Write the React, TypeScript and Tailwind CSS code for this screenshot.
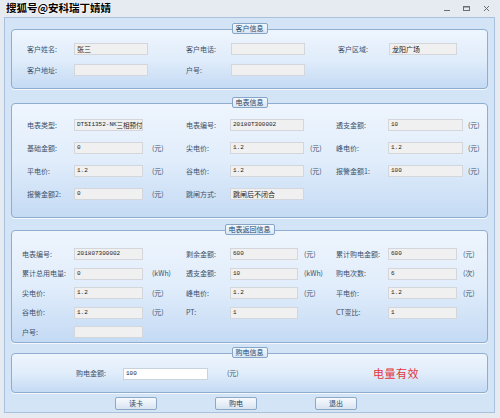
import React from "react";

const CJK = "font-['Noto_Sans_CJK_SC','Noto_Sans',sans-serif]";
const lbl = `text-[7px] leading-none text-[#3d516a] whitespace-nowrap ${CJK}`;
const unit = `text-[7px] leading-none text-[#3d516a] whitespace-nowrap ${CJK}`;
const inputCls =
  "h-[12px] border border-[#d3d6da] bg-[#f0f0f0] flex items-center px-[2px] text-[6px] leading-none text-[#1e1e1e] font-['Liberation_Mono','Noto_Sans_CJK_SC',monospace] whitespace-nowrap overflow-hidden";
const cjkVal = `text-[7px] leading-none text-[#1e1e1e] ${CJK}`;

function Label({ t }: { t: string }) {
  return <div className={`h-[12px] flex items-center ${lbl}`}>{t}</div>;
}
function Input({
  v = "",
  white = false,
  cjk = false,
  children,
}: {
  v?: string;
  white?: boolean;
  cjk?: boolean;
  children?: React.ReactNode;
}) {
  return (
    <div className={`${inputCls} ${white ? "!bg-white !border-[#c9d3de]" : ""}`}>
      {children ? children : cjk ? <span className={cjkVal}>{v}</span> : v}
    </div>
  );
}
function Unit({ t = "", pl }: { t?: string; pl: string }) {
  return <div className={`h-[12px] flex items-center ${pl} ${unit}`}>{t}</div>;
}
function Empty() {
  return <div className="h-[12px]" />;
}

function Box({
  title,
  className,
  children,
}: {
  title: string;
  className: string;
  children: React.ReactNode;
}) {
  return (
    <div
      className={`relative w-[477px] border border-[#8fadcf] rounded-[4px] bg-gradient-to-b from-[#eef5fd] via-[#e1edfb] to-[#c4daf4] shadow-[0_1px_0_#f4f8fc] ${className}`}
    >
      <div
        className={`absolute left-1/2 -translate-x-1/2 -top-[7px] h-[11px] px-[3px] flex items-center border border-[#86a5c7] rounded-[2px] bg-gradient-to-b from-[#f3f8fd] to-[#d9e7f6] text-[7px] leading-none text-[#2c4767] whitespace-nowrap ${CJK}`}
      >
        {title}
      </div>
      {children}
    </div>
  );
}

function Btn({ t }: { t: string }) {
  return (
    <div
      className={`w-[42px] h-[13px] flex items-center justify-center border border-[#8da8c6] rounded-[2px] bg-gradient-to-b from-[#f7fafd] to-[#d8e4f1] text-[7px] leading-none text-[#2f4663] ${CJK}`}
    >
      {t}
    </div>
  );
}

export default function App() {
  return (
    <div className="w-[500px] h-[418px] bg-[#e6ebf1] flex flex-col overflow-hidden">
      {/* title bar */}
      <div className="h-[17px] flex items-center justify-between pl-[6px] pr-[10px]">
        <div
          className={`text-[10.5px] font-bold leading-none text-black [text-shadow:0_0_2px_#fff,0_0_2px_#fff,0_0_1px_#fff] ${CJK}`}
        >
          搜狐号@安科瑞丁婧婧
        </div>
        <div className="flex items-center gap-[12px] text-[#555]">
          <svg width="7" height="7" viewBox="0 0 7 7">
            <rect x="0" y="5" width="6" height="1" fill="#6b6f74" />
          </svg>
          <svg width="8" height="7" viewBox="0 0 8 7">
            <rect x="0.5" y="1.5" width="6" height="4" fill="none" stroke="#6b6f74" />
            <rect x="0.5" y="1" width="6" height="1.5" fill="#6b6f74" />
          </svg>
          <svg width="7" height="7" viewBox="0 0 7 7">
            <path d="M1 1 L6 6 M6 1 L1 6" stroke="#6b6f74" strokeWidth="1" />
          </svg>
        </div>
      </div>

      {/* client area */}
      <div className="ml-[4px] w-[491px] h-[396px] border border-[#a9c1dc] bg-[#d3e4f6] pl-[6px] pt-[11px] flex flex-col">
        {/* 客户信息 */}
        <Box title="客户信息" className="h-[60px] pt-[13px]">
          <div className="grid grid-cols-[47px_74px_38px_45px_74px_33px_51px_68px] gap-y-[9px] pl-[15px]">
            <Label t="客户姓名:" />
            <Input v="张三" cjk />
            <Empty />
            <Label t="客户电话:" />
            <Input />
            <Empty />
            <Label t="客户区域:" />
            <Input v="龙阳广场" cjk />

            <Label t="客户地址:" />
            <Input />
            <Empty />
            <Label t="户号:" />
            <Input />
            <Empty />
            <Empty />
            <Empty />
          </div>
        </Box>

        {/* 电表信息 */}
        <Box title="电表信息" className="mt-[14px] h-[115px] pt-[15px]">
          <div className="grid grid-cols-[47px_69px_43px_44px_74px_32px_52px_75px_20px] gap-y-[11px] pl-[15px]">
            <Label t="电表类型:" />
            <Input>
              <span>DTSI1352-NK</span>
              <span className={`text-[6.5px] leading-none ${CJK}`}>三相预付</span>
            </Input>
            <Empty />
            <Label t="电表编号:" />
            <Input v="20180T300002" />
            <Empty />
            <Label t="透支金额:" />
            <Input v="10" />
            <Unit t="(元)" pl="pl-[5px]" />

            <Label t="基础金额:" />
            <Input v="0" />
            <Unit t="(元)" pl="pl-[9px]" />
            <Label t="尖电价:" />
            <Input v="1.2" />
            <Unit t="(元)" pl="pl-[6px]" />
            <Label t="峰电价:" />
            <Input v="1.2" />
            <Unit t="(元)" pl="pl-[5px]" />

            <Label t="平电价:" />
            <Input v="1.2" />
            <Unit t="(元)" pl="pl-[9px]" />
            <Label t="谷电价:" />
            <Input v="1.2" />
            <Unit t="(元)" pl="pl-[6px]" />
            <Label t="报警金额1:" />
            <Input v="100" />
            <Unit t="(元)" pl="pl-[5px]" />

            <Label t="报警金额2:" />
            <Input v="0" />
            <Unit t="(元)" pl="pl-[9px]" />
            <Label t="跳闸方式:" />
            <Input v="跳闸后不闭合" cjk />
            <Empty />
            <Empty />
            <Empty />
            <Empty />
          </div>
        </Box>

        {/* 电表返回信息 */}
        <Box title="电表返回信息" className="mt-[12px] h-[113px] pt-[17px]">
          <div className="grid grid-cols-[52px_69px_43px_44px_68px_38px_52px_69px_24px] gap-y-[7.5px] pl-[10px]">
            <Label t="电表编号:" />
            <Input v="201807300002" />
            <Empty />
            <Label t="剩余金额:" />
            <Input v="600" />
            <Unit t="(元)" pl="pl-[6px]" />
            <Label t="累计购电金额:" />
            <Input v="600" />
            <Unit t="(元)" pl="pl-[6px]" />

            <Label t="累计总用电量:" />
            <Input v="0" />
            <Unit t="(kWh)" pl="pl-[9px]" />
            <Label t="透支金额:" />
            <Input v="10" />
            <Unit t="(kWh)" pl="pl-[6px]" />
            <Label t="购电次数:" />
            <Input v="6" />
            <Unit t="(次)" pl="pl-[6px]" />

            <Label t="尖电价:" />
            <Input v="1.2" />
            <Unit t="(元)" pl="pl-[9px]" />
            <Label t="峰电价:" />
            <Input v="1.2" />
            <Unit t="(元)" pl="pl-[6px]" />
            <Label t="平电价:" />
            <Input v="1.2" />
            <Unit t="(元)" pl="pl-[6px]" />

            <Label t="谷电价:" />
            <Input v="1.2" />
            <Unit t="(元)" pl="pl-[9px]" />
            <Label t="PT:" />
            <Input v="1" />
            <Empty />
            <Label t="CT变比:" />
            <Input v="1" />
            <Empty />

            <Label t="户号:" />
            <Input />
            <Empty />
            <Empty />
            <Empty />
            <Empty />
            <Empty />
            <Empty />
            <Empty />
          </div>
        </Box>

        {/* 购电信息 */}
        <Box title="购电信息" className="mt-[10px] h-[40px] pt-[1px] flex items-center">
          <div className="flex items-center pl-[64px]">
            <div className={`w-[47px] ${lbl}`}>购电金额:</div>
            <div className="w-[85px]">
              <Input v="100" white />
            </div>
            <div className={`ml-[19px] w-[146px] ${unit}`}>(元)</div>
            <div className={`text-[11px] leading-none tracking-[0.5px] text-[#e2363c] ${CJK}`}>
              电量有效
            </div>
          </div>
        </Box>

        {/* buttons */}
        <div className="mt-[4px] flex gap-[58px] pl-[104px]">
          <Btn t="读卡" />
          <Btn t="购电" />
          <Btn t="退出" />
        </div>
      </div>
    </div>
  );
}
